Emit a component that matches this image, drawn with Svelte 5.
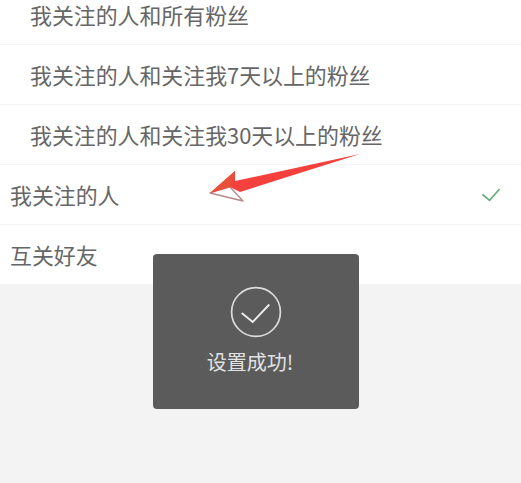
<script>
  const rows = [
    { label: '我关注的人和所有粉丝', indent: true },
    { label: '我关注的人和关注我7天以上的粉丝', indent: true },
    { label: '我关注的人和关注我30天以上的粉丝', indent: true },
    { label: '我关注的人', indent: false, checked: true },
    { label: '互关好友', indent: false }
  ];
</script>

<div class="page">
  <ul class="list">
    {#each rows as row}
      <li class="row" class:sub={row.indent}>
        <span class="label">{row.label}</span>
        {#if row.checked}
          <svg class="check" width="20" height="14" viewBox="0 0 20 14" aria-hidden="true">
            <path d="M1.5 6.5 L8.6 12.4 L18.6 1" fill="none" stroke="#63b07f" stroke-width="1.7" />
          </svg>
        {/if}
      </li>
    {/each}
  </ul>

  <svg class="arrow" width="160" height="60" viewBox="0 0 160 60" aria-hidden="true">
    <path d="M5 43 L38 51 L25 37 Z" fill="#fff" stroke="#b58a88" stroke-width="1.3" stroke-linejoin="round" />
    <path d="M155 4 L30 31 L30 21 L5 43 L25 37 L35 42 Z" fill="#f4413d" />
    <path d="M30 21 L5 43 L25 37 Z" fill="#e8503a" />
  </svg>

  <div class="toast">
    <svg width="52" height="52" viewBox="0 0 52 52" aria-hidden="true">
      <circle cx="26" cy="26" r="24.4" fill="none" stroke="#dcdcdc" stroke-width="1.7" />
      <path d="M11.7 27 L22.7 36 L39.3 18.5" fill="none" stroke="#ececec" stroke-width="1.9" />
    </svg>
    <span class="msg">设置成功!</span>
  </div>
</div>

<style>
  :global(body) {
    margin: 0;
    background: #f3f3f3;
  }
  .page {
    position: relative;
    width: 521px;
    height: 483px;
    overflow: hidden;
    background: #f3f3f3;
    font-family: "Noto Sans CJK SC", "Liberation Sans", sans-serif;
  }
  .list {
    list-style: none;
    margin: -15px 0 0;
    padding: 0;
    background: #fff;
  }
  .row {
    display: flex;
    align-items: center;
    justify-content: space-between;
    box-sizing: border-box;
    height: 60px;
    padding: 0 20px 0 10px;
    border-bottom: 1px solid #f5f5f5;
    color: #666;
    font-size: 21.9px;
  }
  .row:last-child {
    border-bottom: 0;
    height: 59px;
  }
  .sub {
    padding-left: 30px;
  }
  .arrow {
    position: absolute;
    left: 205px;
    top: 150px;
  }
  .toast {
    position: absolute;
    left: 153px;
    top: 254px;
    width: 206px;
    height: 155px;
    box-sizing: border-box;
    padding-top: 32px;
    display: flex;
    flex-direction: column;
    align-items: center;
    background: #5b5b5b;
    border-radius: 4px;
    color: #e2e2e2;
  }
  .msg {
    margin-top: 10px;
    margin-right: 12px;
    font-size: 20px;
    line-height: 28px;
  }
</style>
